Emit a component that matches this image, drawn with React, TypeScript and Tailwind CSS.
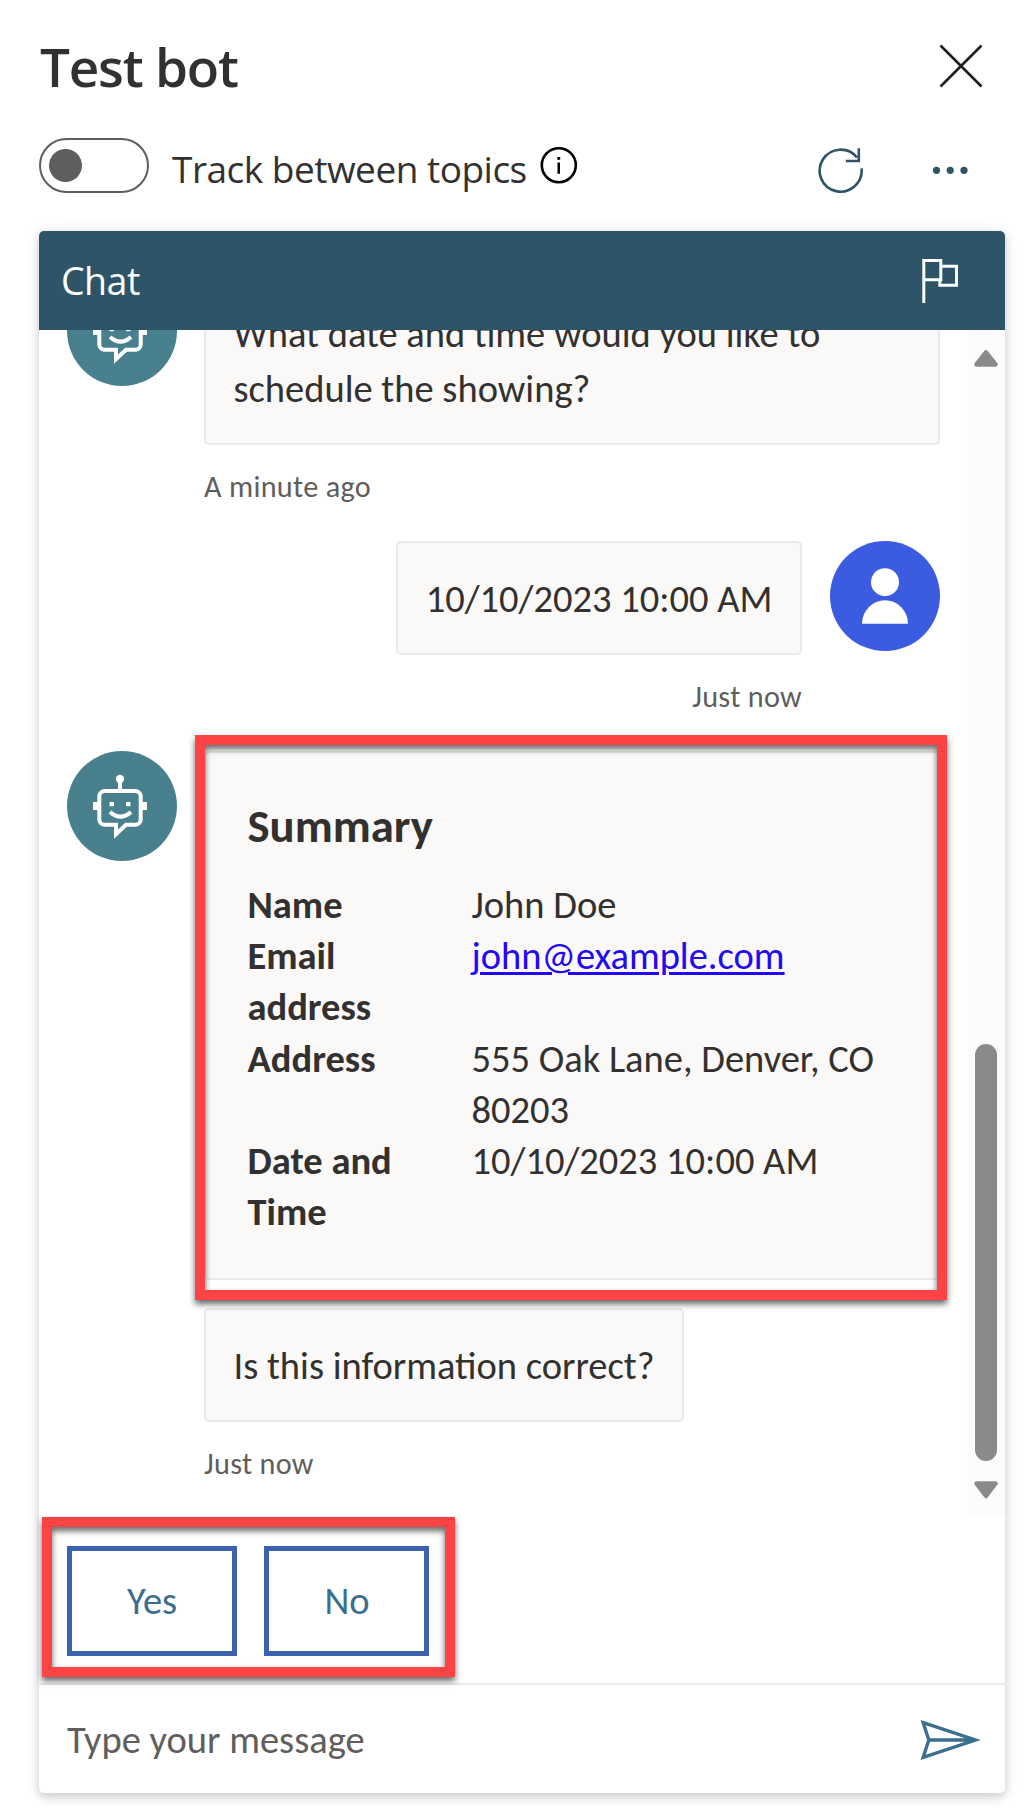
import type { ReactNode } from "react";

function BotAvatar() {
  return (
    <div className="size-[110px] shrink-0 rounded-full bg-[#48818d]">
      <svg viewBox="0 0 110 110" className="size-full" fill="none" stroke="#fff" strokeWidth="4">
        <circle cx="53" cy="28" r="4.2" fill="#fff" stroke="none" />
        <path d="M53 28V40" />
        <path d="M37.8 40H68.2A5.5 5.5 0 0 1 73.7 45.5V68.2A5.5 5.5 0 0 1 68.2 73.7H59L49 83.2V73.7H37.8A5.5 5.5 0 0 1 32.3 68.2V45.5A5.5 5.5 0 0 1 37.8 40Z" />
        <path d="M43 61Q53.5 70.3 64 61" />
        <g fill="#fff" stroke="none">
          <rect x="26" y="51" width="5" height="8" />
          <rect x="75" y="51" width="5" height="8" />
          <rect x="42.5" y="51" width="4.5" height="4.2" />
          <rect x="59" y="51" width="4.5" height="4.2" />
        </g>
      </svg>
    </div>
  );
}

function UserAvatar() {
  return (
    <div className="size-[110px] shrink-0 rounded-full bg-[#3b5be0]">
      <svg viewBox="0 0 110 110" className="size-full" fill="#fff">
        <circle cx="55" cy="41.2" r="14" />
        <path d="M32 82.7A23 23.4 0 0 1 78 82.7Z" />
      </svg>
    </div>
  );
}

function Bubble({ children }: { children: ReactNode }) {
  return (
    <div className="w-fit rounded-[5px] border-2 border-[#ebeae9] bg-[#faf9f8] px-[27.5px] py-[27.5px] leading-[55px]">
      {children}
    </div>
  );
}

function Stamp({ children, right = false }: { children: ReactNode; right?: boolean }) {
  return (
    <div
      className={`h-24 pt-[22px] text-[30.25px] leading-[39px] tracking-[0.3px] text-[#605e5c] ${right ? "text-right" : "text-left"}`}
    >
      {children}
    </div>
  );
}

function Highlight({ className }: { className: string }) {
  return (
    <div
      className={`pointer-events-none absolute z-10 border-10 border-[#fd4343] drop-shadow-[0_4px_3px_rgba(0,0,0,0.6)] ${className}`}
    />
  );
}

const facts: { label: string; value: ReactNode }[] = [
  { label: "Name", value: "John Doe" },
  {
    label: "Email address",
    value: (
      <a href="#" className="text-[#2308f5] underline decoration-[3px] underline-offset-[3px]">
        john@example.com
      </a>
    ),
  },
  { label: "Address", value: "555 Oak Lane, Denver, CO 80203" },
  { label: "Date and Time", value: "10/10/2023 10:00 AM" },
];

export default function App() {
  return (
    <div className="h-[1814px] w-[1028px] overflow-hidden bg-white pl-[39px] pr-[23px] font-['Carlito','Calibri','Lato',sans-serif] text-[38.5px] text-[#323130]">
      <header className="flex h-[138px] items-start justify-between pr-[21px] pt-[30px] font-['Open_Sans','Noto_Sans',sans-serif]">
        <h1 className="pl-px text-[53px] font-semibold leading-[74px] tracking-[-1.2px]">Test bot</h1>
        <svg className="mt-[13px] size-[46px]" viewBox="0 0 46 46" stroke="#201f1e" strokeWidth="2.6">
          <path d="M2.5 2.5L43.5 43.5M43.5 2.5L2.5 43.5" />
        </svg>
      </header>

      <div className="flex h-[93px] items-start pr-[37px] font-['Open_Sans','Noto_Sans',sans-serif]">
        <div className="flex h-[55px] w-[110px] items-center rounded-full border-2 border-[#605e5c] px-2">
          <div className="size-[33px] rounded-full bg-[#605e5c]" />
        </div>
        <span className="ml-[22px] mt-[5px] w-[369px] whitespace-nowrap pl-px text-[37px] leading-[52px] tracking-[-0.5px]">
          Track between topics
        </span>
        <svg className="mt-[8px] size-[38px]" viewBox="0 0 38 38">
          <circle cx="18.8" cy="19.2" r="17" fill="none" stroke="#000" strokeWidth="2.6" />
          <path d="M17.3 11h2.9v2.7h-2.9zM17.5 16.5h2.5v11.2h-2.5z" fill="#000" />
        </svg>
        <svg className="ml-auto mt-[8px] size-[48px]" viewBox="0 0 48 48" fill="none" stroke="#2e5567" strokeWidth="2.6">
          <path d="M46.5 22.3A21 21 0 1 1 42 11.5M43.8 2.3V15H30.8" />
        </svg>
        <svg className="ml-[69px] mt-[27px] h-[10px] w-[36px]" viewBox="0 0 36 10" fill="#2e5567">
          <circle cx="4.5" cy="5.3" r="3.6" />
          <circle cx="18.2" cy="5.3" r="3.6" />
          <circle cx="32" cy="5.3" r="3.6" />
        </svg>
      </div>

      <section className="flex h-[1562px] flex-col rounded-[5px] bg-white shadow-[0_4px_10px_rgba(0,0,0,0.17),0_1px_16px_rgba(0,0,0,0.07)]">
        <div className="flex h-[99px] shrink-0 items-center justify-between rounded-t-[5px] bg-[#2e5567] pl-[22px] pr-[46px] text-white">
          <span className="font-['Open_Sans','Noto_Sans',sans-serif] text-[37.5px] leading-[52px] tracking-[-0.5px]">
            Chat
          </span>
          <svg className="mb-[2px] h-[46px] w-[40px]" viewBox="0 0 40 46" fill="none" stroke="#fff" strokeWidth="3">
            <path d="M4.8 46V3.5H21.8V22.8H4.8M21.8 9.2H37.5V28.2H20.8V22.8" />
          </svg>
        </div>

        <div className="flex h-[1187px] overflow-hidden">
          <div className="w-[928px] px-7 pr-[27px]">
            <div className="-mt-[54px] flex gap-[27px]">
              <BotAvatar />
              <div className="flex-1">
                <Bubble>
                  <div className="w-[677px]">
                    What date and time would you like to
                    <br />
                    schedule the showing?
                  </div>
                </Bubble>
                <Stamp>A minute ago</Stamp>
              </div>
            </div>

            <div className="flex justify-end gap-[28px]">
              <div>
                <Bubble>10/10/2023 10:00 AM</Bubble>
                <Stamp right>Just now</Stamp>
              </div>
              <UserAvatar />
            </div>

            <div className="flex gap-[27px]">
              <BotAvatar />
              <div className="relative flex-1">
                <Highlight className="-left-[9px] -top-4 h-[565px] w-[752px]" />
                <div className="h-[529px] rounded-[5px] border-2 border-[#ebeae9] bg-[#faf9f8] px-[41.5px]">
                  <h2 className="mt-[42px] text-[46.75px] font-bold leading-[62px]">Summary</h2>
                  <dl className="mt-[22px] leading-[51.2px]">
                    {facts.map((f) => (
                      <div key={f.label} className="flex">
                        <dt className="w-[224px] shrink-0 pr-[28px] font-bold">{f.label}</dt>
                        <dd className="flex-1">{f.value}</dd>
                      </div>
                    ))}
                  </dl>
                </div>
                <div className="mt-7">
                  <Bubble>Is this information correct?</Bubble>
                </div>
                <Stamp>Just now</Stamp>
              </div>
            </div>
          </div>

          <div className="flex w-[38px] flex-col items-center bg-[#fcfcfc] pt-[20px]">
            <svg className="h-[17px] w-[24px]" viewBox="0 0 24 17">
              <path d="M12 2.5L21.5 14.5H2.5Z" fill="#8a8a8a" stroke="#8a8a8a" strokeWidth="4.5" strokeLinejoin="round" />
            </svg>
            <div className="mt-[677px] h-[417px] w-[22px] rounded-full bg-[#8a8a8a]" />
            <svg className="mt-[20px] h-[18px] w-[24px]" viewBox="0 0 24 18">
              <path d="M12 15L21.5 2.5H2.5Z" fill="#8a8a8a" stroke="#8a8a8a" strokeWidth="4.5" strokeLinejoin="round" />
            </svg>
          </div>
        </div>

        <div className="relative flex h-[166px] shrink-0 gap-[27px] pl-7 pt-[29px] text-[#3c6e8f]">
          <Highlight className="left-[3px] top-0 h-[160px] w-[413px]" />
          <button className="h-[110px] w-[170px] border-5 border-[#3a62ae]">Yes</button>
          <button className="h-[110px] w-[165px] border-5 border-[#3a62ae] pl-px">No</button>
        </div>

        <div className="flex h-[110px] items-center justify-between border-t-2 border-[#ebeae9] pl-7 pr-[24px]">
          <span className="pt-[2px] text-[#605e5c]">Type your message</span>
          <svg className="mt-px h-[40px] w-[61px]" viewBox="0 0 61 40" fill="none" stroke="#3c6e8f" strokeWidth="3.4">
            <path d="M3.2 2.7L55.5 20L3.2 37.3L8.8 20ZM8.8 20H55" strokeMiterlimit="10" />
          </svg>
        </div>
      </section>
    </div>
  );
}
